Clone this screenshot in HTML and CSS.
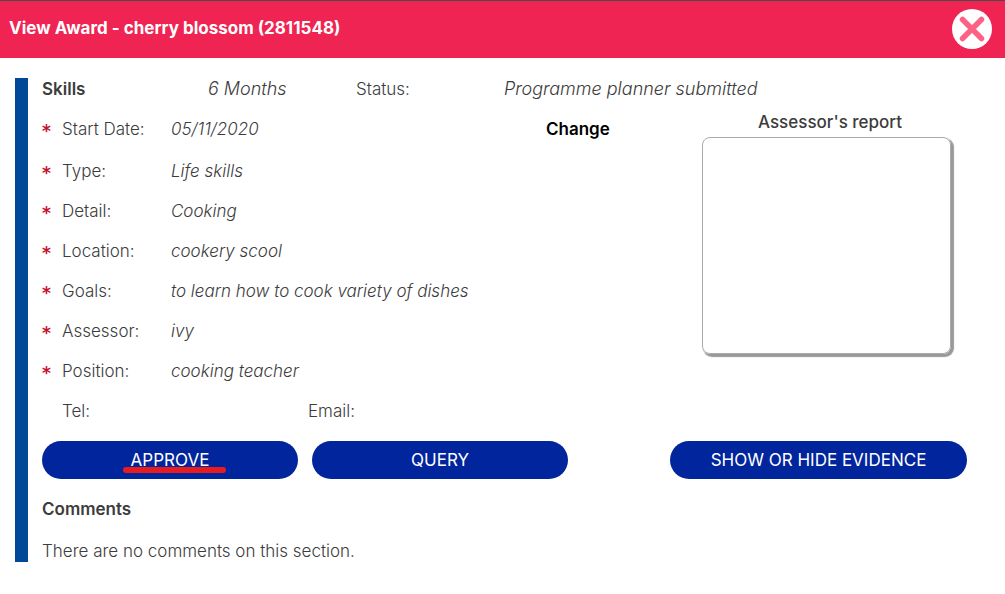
FILE: index.html
```html
<!DOCTYPE html>
<html lang="en">
<head>
  <meta charset="UTF-8" />
  <meta name="viewport" content="width=device-width, initial-scale=1" />
  <title>View Award</title>
  <link rel="stylesheet" href="styles.css">
</head>
<body>

  <header class="title-bar">
    <h1>View Award - cherry blossom (2811548)</h1>
    <button class="close" aria-label="Close">
      <svg viewBox="0 0 40 40" width="40" height="40">
        <circle cx="20" cy="20" r="20" fill="#fff" />
        <path d="M10.5 10.5 L29.5 29.5 M29.5 10.5 L10.5 29.5" stroke="#fd6186" stroke-width="5.5" stroke-linecap="round" />
      </svg>
    </button>
  </header>

  <main class="award">
    <div class="summary">
      <h2>Skills</h2>
      <em>6 Months</em>
      <span>Status:</span>
      <em>Programme planner submitted</em>
    </div>

    <div class="details">
      <dl class="fields">
        <div class="field start">
          <dt class="required">Start Date:</dt>
          <dd>05/11/2020</dd>
          <dd class="action"><a href="#">Change</a></dd>
        </div>
        <div class="field">
          <dt class="required">Type:</dt>
          <dd>Life skills</dd>
        </div>
        <div class="field">
          <dt class="required">Detail:</dt>
          <dd>Cooking</dd>
        </div>
        <div class="field">
          <dt class="required">Location:</dt>
          <dd>cookery scool</dd>
        </div>
        <div class="field">
          <dt class="required">Goals:</dt>
          <dd>to learn how to cook variety of dishes</dd>
        </div>
        <div class="field">
          <dt class="required">Assessor:</dt>
          <dd>ivy</dd>
        </div>
        <div class="field">
          <dt class="required">Position:</dt>
          <dd>cooking teacher</dd>
        </div>
        <div class="contact">
          <dt>Tel:</dt>
          <dt>Email:</dt>
        </div>
      </dl>

      <!-- Report -->
      <section class="report">
        <h3>Assessor's report</h3>
        <div class="report-box"></div>
      </section>
    </div>

    <div class="actions">
      <div class="decision">
        <button class="btn"><span class="marked">APPROVE</span></button>
        <button class="btn">QUERY</button>
      </div>
      <button class="btn evidence">SHOW OR HIDE EVIDENCE</button>
    </div>

    <!-- Comments -->
    <section class="comments">
      <h2>Comments</h2>
      <p>There are no comments on this section.</p>
    </section>
  </main>

</body>
</html>
```
FILE: styles.css
```css
* {
  box-sizing: border-box;
}

body {
  font-family: Inter, 'Open Sans', sans-serif;
  font-size: 17px;
  font-weight: 300;
  line-height: 22px;
  margin: 0;
  background: #fff;
  color: #3c3c3c;
}

h1, h2, h3, p, dl, dd {
  margin: 0;
  font-size: 17px;
}

h2, h3 {
  font-weight: 600;
}

.title-bar {
  display: flex;
  justify-content: space-between;
  align-items: flex-start;
  padding: 8px 13px 9px 9px;
  border-top: 1px solid #4a4a4a;
  background: #ef2453;
  color: #fff;
}

.title-bar h1 {
  padding-top: 8px;
  font-weight: 700;
}

.close {
  padding: 0;
  border: none;
  background: none;
  cursor: pointer;
}

.close svg {
  display: block;
}

.award {
  margin: 20px 15px;
  padding-left: 14px;
  border-left: 13px solid #004996;
}

.summary {
  display: grid;
  grid-template-columns: 166px 148px 148px 1fr;
}

.summary em {
  font-size: 18px;
}

.details, .actions {
  display: grid;
  grid-template-columns: 1fr 320px;
}

.fields {
  display: flex;
  flex-direction: column;
  gap: 18px;
  padding-top: 18px;
}

.field {
  display: grid;
  grid-template-columns: 129px 1fr 124px;
}

.start {
  padding-bottom: 2px;
}

.contact dt {
  padding-left: 20px;
}

.contact dt + dt {
  padding-left: 0;
}

.required {
  display: flex;
}

.required::before {
  content: '*';
  width: 20px;
  height: 22px;
  color: #c4122f;
  font: 700 17px/26px 'DejaVu Sans', sans-serif;
}

.field dd {
  font-style: italic;
}

.field .action {
  font-style: normal;
  font-weight: 600;
}

.action a {
  color: #000;
  text-decoration: none;
}

.contact {
  display: grid;
  grid-template-columns: 266px 1fr;
}

.report {
  display: flex;
  flex-direction: column;
  align-items: center;
  padding-top: 11px;
}

.report h3 {
  font-weight: 500;
}

.report-box {
  width: 249px;
  height: 217px;
  margin: 4px 7px 0 0;
  border: 1px solid #aaa;
  border-radius: 8px;
  box-shadow: 2px 2px 1px 1px #999;
}

.actions {
  margin-top: 19px;
}

.decision {
  display: grid;
  grid-template-columns: 256px 256px;
  gap: 14px;
}

.btn {
  height: 38px;
  padding: 0;
  border: none;
  border-radius: 19px;
  background: #00259c;
  color: #fff;
  font: inherit;
  font-weight: 400;
  cursor: pointer;
}

.evidence {
  margin-right: 23px;
}

.marked {
  position: relative;
}

/* red marker line under the word */
.marked::after {
  content: '';
  position: absolute;
  left: -8px;
  right: -17px;
  bottom: -3px;
  height: 6px;
  border-radius: 3px;
  background: #e81c1f;
}

.comments {
  display: grid;
  gap: 20px;
  margin-top: 19px;
}
```
